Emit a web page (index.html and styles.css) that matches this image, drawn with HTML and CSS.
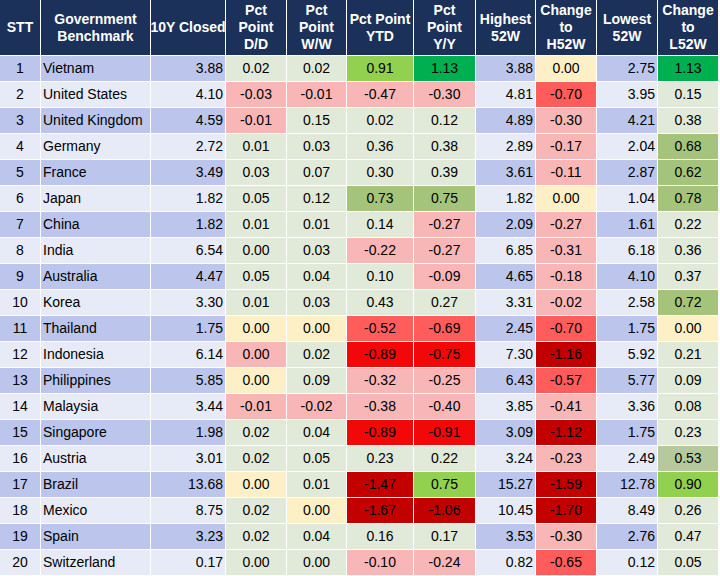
FILE: index.html
```html
<!DOCTYPE html>
<html>
<head>
<meta charset="utf-8">
<link rel="stylesheet" href="styles.css">
</head>
<body>
<div class="tbl">
  <div class="row head">
    <div>STT</div><div>Government<br>Benchmark</div><div>10Y Closed</div>
    <div>Pct<br>Point<br>D/D</div><div>Pct<br>Point<br>W/W</div>
    <div>Pct Point<br>YTD</div><div>Pct<br>Point<br>Y/Y</div>
    <div>Highest<br>52W</div><div>Change<br>to<br>H52W</div>
    <div>Lowest<br>52W</div><div>Change<br>to<br>L52W</div>
  </div>
  <div class="row odd"><div class="c">1</div><div class="l">Vietnam</div><div class="r">3.88</div><div class="n">0.02</div><div class="n">0.02</div><div class="g2">0.91</div><div class="g3">1.13</div><div class="r">3.88</div><div class="y">0.00</div><div class="r">2.75</div><div class="g3">1.13</div></div>
  <div class="row even"><div class="c">2</div><div class="l">United States</div><div class="r">4.10</div><div class="p">-0.03</div><div class="p">-0.01</div><div class="p">-0.47</div><div class="p">-0.30</div><div class="r">4.81</div><div class="m">-0.70</div><div class="r">3.95</div><div class="n">0.15</div></div>
  <div class="row odd"><div class="c">3</div><div class="l">United Kingdom</div><div class="r">4.59</div><div class="p">-0.01</div><div class="n">0.15</div><div class="n">0.02</div><div class="n">0.12</div><div class="r">4.89</div><div class="p">-0.30</div><div class="r">4.21</div><div class="n">0.38</div></div>
  <div class="row even"><div class="c">4</div><div class="l">Germany</div><div class="r">2.72</div><div class="n">0.01</div><div class="n">0.03</div><div class="n">0.36</div><div class="n">0.38</div><div class="r">2.89</div><div class="p">-0.17</div><div class="r">2.04</div><div class="g1">0.68</div></div>
  <div class="row odd"><div class="c">5</div><div class="l">France</div><div class="r">3.49</div><div class="n">0.03</div><div class="n">0.07</div><div class="n">0.30</div><div class="n">0.39</div><div class="r">3.61</div><div class="p">-0.11</div><div class="r">2.87</div><div class="g1">0.62</div></div>
  <div class="row even"><div class="c">6</div><div class="l">Japan</div><div class="r">1.82</div><div class="n">0.05</div><div class="n">0.12</div><div class="g1">0.73</div><div class="g1">0.75</div><div class="r">1.82</div><div class="y">0.00</div><div class="r">1.04</div><div class="g1">0.78</div></div>
  <div class="row odd"><div class="c">7</div><div class="l">China</div><div class="r">1.82</div><div class="n">0.01</div><div class="n">0.01</div><div class="n">0.14</div><div class="p">-0.27</div><div class="r">2.09</div><div class="p">-0.27</div><div class="r">1.61</div><div class="n">0.22</div></div>
  <div class="row even"><div class="c">8</div><div class="l">India</div><div class="r">6.54</div><div class="n">0.00</div><div class="n">0.03</div><div class="p">-0.22</div><div class="p">-0.27</div><div class="r">6.85</div><div class="p">-0.31</div><div class="r">6.18</div><div class="n">0.36</div></div>
  <div class="row odd"><div class="c">9</div><div class="l">Australia</div><div class="r">4.47</div><div class="n">0.05</div><div class="n">0.04</div><div class="n">0.10</div><div class="p">-0.09</div><div class="r">4.65</div><div class="p">-0.18</div><div class="r">4.10</div><div class="n">0.37</div></div>
  <div class="row even"><div class="c">10</div><div class="l">Korea</div><div class="r">3.30</div><div class="n">0.01</div><div class="n">0.03</div><div class="n">0.43</div><div class="n">0.27</div><div class="r">3.31</div><div class="p">-0.02</div><div class="r">2.58</div><div class="g1">0.72</div></div>
  <div class="row odd"><div class="c">11</div><div class="l">Thailand</div><div class="r">1.75</div><div class="y">0.00</div><div class="y">0.00</div><div class="m">-0.52</div><div class="m">-0.69</div><div class="r">2.45</div><div class="m">-0.70</div><div class="r">1.75</div><div class="y">0.00</div></div>
  <div class="row even"><div class="c">12</div><div class="l">Indonesia</div><div class="r">6.14</div><div class="p">0.00</div><div class="n">0.02</div><div class="b">-0.89</div><div class="b">-0.75</div><div class="r">7.30</div><div class="d">-1.16</div><div class="r">5.92</div><div class="n">0.21</div></div>
  <div class="row odd"><div class="c">13</div><div class="l">Philippines</div><div class="r">5.85</div><div class="y">0.00</div><div class="n">0.09</div><div class="p">-0.32</div><div class="p">-0.25</div><div class="r">6.43</div><div class="m">-0.57</div><div class="r">5.77</div><div class="n">0.09</div></div>
  <div class="row even"><div class="c">14</div><div class="l">Malaysia</div><div class="r">3.44</div><div class="p">-0.01</div><div class="p">-0.02</div><div class="p">-0.38</div><div class="p">-0.40</div><div class="r">3.85</div><div class="p">-0.41</div><div class="r">3.36</div><div class="n">0.08</div></div>
  <div class="row odd"><div class="c">15</div><div class="l">Singapore</div><div class="r">1.98</div><div class="n">0.02</div><div class="n">0.04</div><div class="b">-0.89</div><div class="b">-0.91</div><div class="r">3.09</div><div class="d">-1.12</div><div class="r">1.75</div><div class="n">0.23</div></div>
  <div class="row even"><div class="c">16</div><div class="l">Austria</div><div class="r">3.01</div><div class="n">0.02</div><div class="n">0.05</div><div class="n">0.23</div><div class="n">0.22</div><div class="r">3.24</div><div class="p">-0.23</div><div class="r">2.49</div><div class="g0">0.53</div></div>
  <div class="row odd"><div class="c">17</div><div class="l">Brazil</div><div class="r">13.68</div><div class="y">0.00</div><div class="n">0.01</div><div class="d">-1.47</div><div class="g2">0.75</div><div class="r">15.27</div><div class="d">-1.59</div><div class="r">12.78</div><div class="g2">0.90</div></div>
  <div class="row even"><div class="c">18</div><div class="l">Mexico</div><div class="r">8.75</div><div class="n">0.02</div><div class="y">0.00</div><div class="d">-1.67</div><div class="d">-1.06</div><div class="r">10.45</div><div class="d">-1.70</div><div class="r">8.49</div><div class="n">0.26</div></div>
  <div class="row odd"><div class="c">19</div><div class="l">Spain</div><div class="r">3.23</div><div class="n">0.02</div><div class="n">0.04</div><div class="n">0.16</div><div class="n">0.17</div><div class="r">3.53</div><div class="p">-0.30</div><div class="r">2.76</div><div class="n">0.47</div></div>
  <div class="row even"><div class="c">20</div><div class="l">Switzerland</div><div class="r">0.17</div><div class="n">0.00</div><div class="n">0.00</div><div class="p">-0.10</div><div class="p">-0.24</div><div class="r">0.82</div><div class="m">-0.65</div><div class="r">0.12</div><div class="n">0.05</div></div>
</div>
</body>
</html>
```
FILE: styles.css
```css
html, body {
  margin: 0;
  padding: 0;
  background: #ffffff;
}
.tbl {
  display: flex;
  flex-direction: column;
  gap: 1px;
  width: 718px;
  font-family: "Liberation Sans", Arial, sans-serif;
  font-size: 14px;
  color: #000;
}
.row {
  display: grid;
  grid-template-columns: 40px 109px 74px 60px 59px 66px 61px 59px 60px 60px 60px;
  column-gap: 1px;
  height: 25px;
}
.row > div {
  display: flex;
  align-items: center;
  justify-content: center;
  white-space: nowrap;
  line-height: 17px;
}
.head {
  height: 55px;
}
.head > div {
  background: #1b3159;
  color: #ffffff;
  font-weight: bold;
  text-align: center;
  letter-spacing: 0;
}
.odd > .c, .odd > .l, .odd > .r { background: #bcc6ec; }
.even > .c, .even > .l, .even > .r { background: #e7ebf8; }
.row > .l { justify-content: flex-start; padding-left: 2px; }
.row > .r { justify-content: flex-end; padding-right: 2px; }
.row > .n { background: #e1e9d9; }
.row > .p { background: #f8b6b6; }
.row > .y { background: #fdf0c6; }
.row > .m { background: #ff5c5c; }
.row > .b { background: #f20808; }
.row > .d { background: #c20000; }
.row > .g0 { background: #b5c99c; }
.row > .g1 { background: #a5c47b; }
.row > .g2 { background: #92d050; }
.row > .g3 { background: #00b050; }
```
